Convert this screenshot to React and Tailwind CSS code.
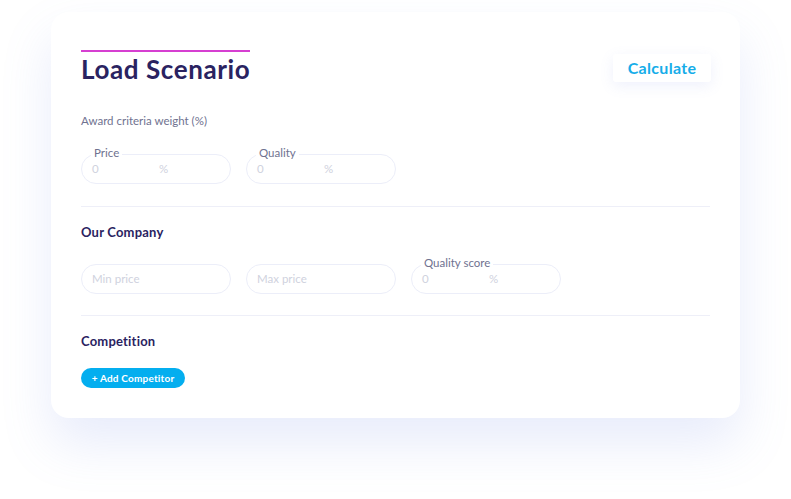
import React from 'react'

const font = { fontFamily: 'Lato, "Noto Sans", sans-serif' }

function Field({ label, placeholder, unit }) {
  return (
    <div className="relative w-[150px] h-[30px] rounded-full border border-[#eceef9] flex items-center pl-[10px]">
      {label && (
        <span className="absolute -top-[9px] left-[9px] bg-white px-[3px] text-[11.5px] leading-[14px] text-[#6f7290]">
          {label}
        </span>
      )}
      <span className="text-[11.5px] text-[#cfd2de] w-[67px]">{placeholder}</span>
      {unit && <span className="text-[11.5px] text-[#cfd2de]">{unit}</span>}
    </div>
  )
}

export default function App() {
  return (
    <div className="w-[791px] h-[499px] bg-white overflow-hidden" style={font}>
      <div className="ml-[51px] mt-[12px] w-[689px] h-[406px] bg-white rounded-[18px] shadow-[0_26px_50px_rgba(120,140,230,0.17)] px-[30px] pt-[38px]">
        <div className="flex justify-between items-start">
          <div>
            <div className="w-[169px] h-[2px] bg-[#d63fd1]" />
            <h1 className="mt-[2px] text-[26px] leading-[30px] font-bold text-[#2a2361] tracking-[0.6px]">
              Load Scenario
            </h1>
          </div>
          <button className="mt-[4px] mr-[-1px] w-[98px] h-[28px] bg-white rounded-[3px] shadow-[0_4px_14px_rgba(120,140,230,0.12)] text-[16px] font-bold text-[#16ade9] tracking-[0.3px]">
            Calculate
          </button>
        </div>

        <p className="mt-[30px] text-[11.5px] leading-[14px] text-[#6f7290]">Award criteria weight (%)</p>

        <div className="mt-[26px] flex gap-[15px]">
          <Field label="Price" placeholder="0" unit="%" />
          <Field label="Quality" placeholder="0" unit="%" />
        </div>

        <div className="mt-[22px] h-px bg-[#eeeff8]" />

        <h2 className="mt-[17px] text-[13px] leading-[16px] font-bold text-[#2a2361] tracking-[0.2px]">Our Company</h2>

        <div className="mt-[24px] flex gap-[15px]">
          <Field placeholder="Min price" />
          <Field placeholder="Max price" />
          <Field label="Quality score" placeholder="0" unit="%" />
        </div>

        <div className="mt-[21px] h-px bg-[#eeeff8]" />

        <h2 className="mt-[17px] text-[13px] leading-[16px] font-bold text-[#2a2361] tracking-[0.2px]">Competition</h2>

        <button className="mt-[19px] w-[104px] h-[20px] rounded-full bg-[#04aeef] text-white text-[10px] font-bold tracking-[0.2px]">
          + Add Competitor
        </button>
      </div>
    </div>
  )
}
